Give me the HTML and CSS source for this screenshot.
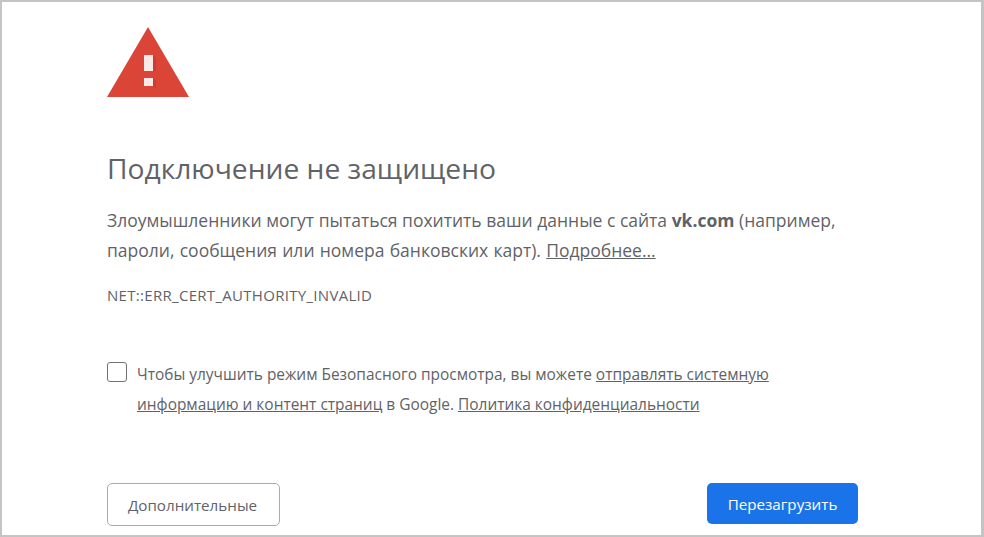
FILE: index.html
```html
<!DOCTYPE html>
<html lang="ru">
  <head>
    <meta charset="UTF-8" />
    <meta name="viewport" content="width=device-width, initial-scale=1.0" />
    <link rel="stylesheet" href="styles.css">
  </head>
  <body>
    <div class="frame">
      <div class="interstitial">
        <svg class="icon" xmlns="http://www.w3.org/2000/svg" viewBox="0 0 82 72">
          <path fill="#da4537" d="M41 1 82 71H0Z" />
          <path fill="#b5342a" d="M46 29 49 32V45L46 45ZM46 52 49 55V63L46 60Z" opacity="0.45" />
          <path fill="#fbe9e7" d="M37 29h9v16h-9zM37 52h9v8h-9z" />
        </svg>
        <h1 class="heading">Подключение не защищено</h1>
        <p class="message">
          <span class="line">Злоумышленники могут пытаться похитить ваши данные с сайта <strong>vk.com</strong> (например,</span>
          <span class="line">пароли, сообщения или номера банковских карт). <a href="#">Подробнее...</a></span>
        </p>
        <p class="error-code">NET::ERR_CERT_AUTHORITY_INVALID</p>
        <div class="opt-in">
          <span class="checkbox"></span>
          <p class="opt-in-text">
            <span class="line">Чтобы улучшить режим Безопасного просмотра, вы можете <a href="#">отправлять системную</a></span>
            <span class="line"><a href="#">информацию и контент страниц</a> в Google. <a href="#">Политика конфиденциальности</a></span>
          </p>
        </div>
        <div class="actions">
          <button type="button" class="btn btn-secondary">Дополнительные</button>
          <button type="button" class="btn btn-primary">Перезагрузить</button>
        </div>
      </div>
    </div>
  </body>
</html>
```

FILE: styles.css
```css
html,
body {
  width: 100%;
  height: 100%;
}

body {
  margin: 0;
  background: white;
  font-family: "Open Sans", "Noto Sans", sans-serif;
  color: #5f6368;
  overflow: hidden;
}

.frame {
  box-sizing: border-box;
  width: 984px;
  height: 537px;
  border: solid #c4c4c4;
  border-width: 2px 3px 2px 2px;
  overflow: hidden;
}

.interstitial {
  width: 751px;
  margin-left: 105px;
  padding-top: 24px;
}

.icon {
  display: block;
  width: 82px;
  height: 72px;
}

.heading {
  margin: 52px 0 0;
  font-size: 28.2px;
  font-weight: 400;
  line-height: 36px;
  color: #5f6368;
}

.line {
  display: block;
  white-space: nowrap;
}

.message {
  margin: 19px 0 0;
  font-size: 17.5px;
  line-height: 30px;
}

.message .line + .line {
  word-spacing: 0.7px;
}

.message strong {
  font-weight: 700;
}

a {
  color: inherit;
}

.error-code {
  margin: 20px 0 0;
  font-size: 15px;
  letter-spacing: 0.3px;
  line-height: 20px;
}

.opt-in {
  display: flex;
  gap: 10px;
  margin-top: 55px;
}

.checkbox {
  flex: none;
  box-sizing: border-box;
  width: 20px;
  height: 20px;
  margin-top: 2px;
  border: 1.5px solid #6e7175;
  border-radius: 3px;
}

.opt-in-text {
  margin: -1px 0 0;
  font-size: 15.45px;
  line-height: 30px;
}

.actions {
  display: flex;
  justify-content: space-between;
  margin-top: 64px;
}

.btn {
  box-sizing: border-box;
  border-radius: 5px;
  font: inherit;
  font-size: 15.2px;
}

.btn-secondary {
  width: 173px;
  height: 43px;
  padding: 0 20px 0 18px;
  background: white;
  border: 1px solid #a9abae;
  color: #5f6368;
}

.btn-primary {
  width: 151px;
  height: 41px;
  background: #1a73e8;
  border: none;
  color: white;
}
```
